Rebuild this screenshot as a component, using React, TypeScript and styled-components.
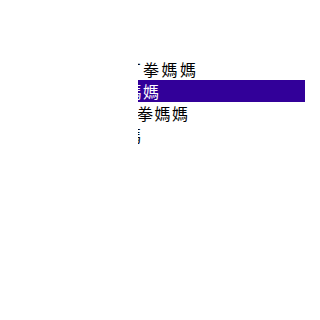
import React from "react";
import styled, { createGlobalStyle } from "styled-components";

const GlobalStyle = createGlobalStyle`
  html, body {
    margin: 0;
    padding: 0;
    background: #fff;
  }
`;

const Screen = styled.div`
  width: 320px;
  height: 320px;
  display: flex;
  align-items: flex-start;
  padding: 58px 0 0 138px;
  box-sizing: border-box;
`;

const ListBox = styled.ul`
  width: 167px;
  margin: 0;
  padding: 0;
  list-style: none;
  overflow: hidden;
  font-family: "Noto Sans CJK TC", "Noto Sans CJK SC", sans-serif;
  font-size: 16px;
`;

const Option = styled.li<{ $selected?: boolean }>`
  height: 22px;
  line-height: 22px;
  white-space: nowrap;
  overflow: hidden;
  color: ${(p) => (p.$selected ? "#fff" : "#000")};
  background: ${(p) => (p.$selected ? "#320099" : "transparent")};
`;

const Label = styled.span<{ $shift: number; $spacing: number }>`
  display: inline-block;
  margin-left: ${(p) => p.$shift}px;
  letter-spacing: ${(p) => p.$spacing}px;
`;

const options = [
  { text: "打拳媽媽", shift: -13.5, spacing: 2.5 },
  { text: "媽媽", shift: -12.5, spacing: 1.5, selected: true },
  { text: "拳媽媽", shift: -1, spacing: 1.5 },
  { text: "媽", shift: -13, spacing: 1.5 },
];

const App: React.FC = () => {
  return (
    <>
      <GlobalStyle />
      <Screen>
        <ListBox>
          {options.map((o, i) => (
            <Option key={i} $selected={o.selected}>
              <Label $shift={o.shift} $spacing={o.spacing}>
                {o.text}
              </Label>
            </Option>
          ))}
        </ListBox>
      </Screen>
    </>
  );
};

export default App;
